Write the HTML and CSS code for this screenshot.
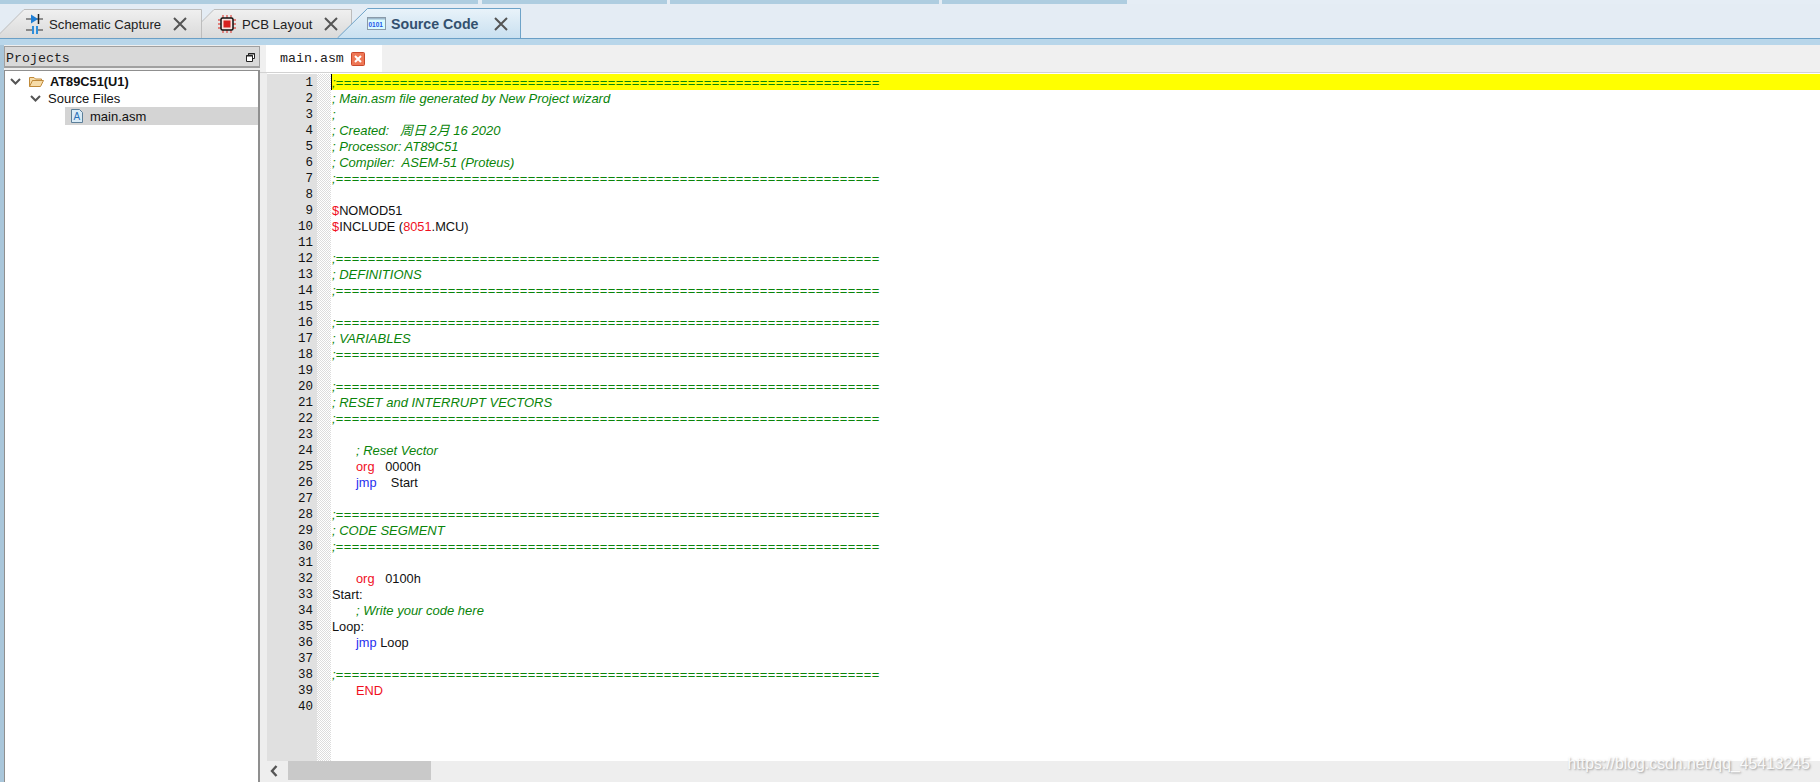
FILE: index.html
```html
<!DOCTYPE html>
<html lang="en">
<head>
<meta charset="utf-8">
<title>Source Code</title>
<link rel="stylesheet" href="styles.css">
</head>
<body>
<svg class="defs" width="0" height="0">
  <defs>
    <linearGradient id="tabGrey" x1="0" y1="0" x2="0" y2="1"><stop offset="0" stop-color="#f0f0f0"/><stop offset="1" stop-color="#dadada"/></linearGradient>
    <linearGradient id="tabBlue" x1="0" y1="0" x2="0" y2="1"><stop offset="0" stop-color="#e9f3fa"/><stop offset="1" stop-color="#c9e0f0"/></linearGradient>
  </defs>
</svg>
<div class="app">
  <div class="strip">
    <i class="seg s1"></i><i class="seg s2"></i><i class="seg s3"></i><i class="seg s4"></i>
  </div>
  <div class="tabbar">
    <div class="tab t1">
      <svg class="shape" width="207" height="29" viewBox="0 0 207 29"><path d="M0.5 29L29 0.5H206.5V29" fill="url(#tabGrey)" stroke="#bdbdbd"/></svg>
      <svg class="ico" width="17" height="22" viewBox="0 0 17 22"><path d="M0 6H17M0 17H7M10 17H17" stroke="#333" fill="none"/><path d="M5 1.500L12 6L5 10.500Z" fill="#1f7fd6"/><path d="M12.500 1V11" stroke="#222" stroke-width="1.500"/><path d="M6 13H8V21H6ZM10 13H12V21H10Z" fill="#2f8fdc"/></svg>
      <span class="label">Schematic Capture</span>
      <svg class="close" width="14" height="14" viewBox="0 0 14 14"><path d="M1 1L13 13M13 1L1 13" stroke="#555" stroke-width="2"/></svg>
    </div>
    <div class="tab t2">
      <svg class="shape" width="167" height="29" viewBox="0 0 167 29"><path d="M0.5 29L29 0.500H166.500V29" fill="url(#tabGrey)" stroke="#bdbdbd"/></svg>
      <svg class="ico" width="18" height="18" viewBox="0 0 18 18"><path d="M0 5H18M0 9H18M0 13H18M5 0V18M9 0V18M13 0V18" stroke="#e0605a" stroke-width="1.400"/><rect x="3" y="3" width="12" height="12" rx="1.500" fill="#f7e3e0" stroke="#111" stroke-width="1.500"/><rect x="5.500" y="5.500" width="7" height="7" fill="#d8201f"/></svg>
      <span class="label">PCB Layout</span>
      <svg class="close" width="14" height="14" viewBox="0 0 14 14"><path d="M1 1L13 13M13 1L1 13" stroke="#555" stroke-width="2"/></svg>
    </div>
    <div class="tab t3">
      <svg class="shape" width="184" height="31" viewBox="0 0 184 31"><path d="M0.5 30L30.500 0.500H183.500V30" fill="url(#tabBlue)" stroke="#6ea3c8"/></svg>
      <svg class="ico" width="19" height="13" viewBox="0 0 19 13"><rect x="0.500" y="0.500" width="18" height="12" fill="#d8fbff" stroke="#8a9aa8"/><rect x="1" y="1" width="17" height="1.500" fill="#9db8cc"/><text x="1.500" y="10" class="bits">0101</text></svg>
      <span class="label strong">Source Code</span>
      <svg class="close" width="14" height="14" viewBox="0 0 14 14"><path d="M1 1L13 13M13 1L1 13" stroke="#555" stroke-width="2"/></svg>
    </div>
  </div>
  <div class="band"></div>
  <div class="main">
    <aside class="side">
      <header class="side-head">
        <span class="mono">Projects</span>
        <svg width="9" height="9" viewBox="0 0 9 9"><path d="M2.500 2.500V0.500H8.500V5.500H6.500M0.500 2.500H6.500V8.500H0.500Z" fill="#fff" stroke="#222"/><path d="M0 3H7M2 1H9" stroke="#222"/></svg>
      </header>
      <div class="tree">
        <div class="row r1">
          <svg class="chev" width="11" height="7" viewBox="0 0 11 7"><path d="M1 1L5.500 5.500L10 1" fill="none" stroke="#555" stroke-width="2"/></svg>
          <svg class="folder" width="15" height="11" viewBox="0 0 15 11"><path d="M0.500 10.500V1.500H5L6.500 3H12.500V4.500H3.500L0.500 10.500ZM0.500 10.500H11.500L14.500 4.500H3.500" fill="#f7dca8" stroke="#c08a3a"/></svg>
          <b>AT89C51(U1)</b>
        </div>
        <div class="row r2">
          <svg class="chev" width="11" height="7" viewBox="0 0 11 7"><path d="M1 1L5.500 5.500L10 1" fill="none" stroke="#555" stroke-width="2"/></svg>
          <span>Source Files</span>
        </div>
        <div class="row r3">
          <svg class="file" width="12" height="14" viewBox="0 0 12 14"><path d="M0.500 0.500H8.500L11.500 3.500V13.500H0.500Z" fill="#d9ebf7" stroke="#5c7f99"/><text x="2.500" y="11" class="fileglyph">A</text></svg>
          <span>main.asm</span>
        </div>
      </div>
    </aside>
    <section class="editor">
      <div class="doc-tabs">
        <div class="doc-tab">
          <span class="mono">main.asm</span>
          <svg width="14" height="14" viewBox="0 0 14 14"><rect x="0.500" y="0.500" width="13" height="13" rx="1" fill="#ee7755" stroke="#c9482c"/><path d="M4 4L10 10M10 4L4 10" stroke="#fff" stroke-width="2"/></svg>
        </div>
      </div>
      <div class="code-area">
        <div class="gutter">
          <div>1</div><div>2</div><div>3</div><div>4</div><div>5</div><div>6</div><div>7</div><div>8</div><div>9</div><div>10</div>
          <div>11</div><div>12</div><div>13</div><div>14</div><div>15</div><div>16</div><div>17</div><div>18</div><div>19</div><div>20</div>
          <div>21</div><div>22</div><div>23</div><div>24</div><div>25</div><div>26</div><div>27</div><div>28</div><div>29</div><div>30</div>
          <div>31</div><div>32</div><div>33</div><div>34</div><div>35</div><div>36</div><div>37</div><div>38</div><div>39</div><div>40</div>
        </div>
        <div class="hatch"></div>
        <div class="code">
          <div class="ln current"><span class="c">;<span class="rule">====================================================================</span></span></div>
          <div class="ln"><span class="c">; Main.asm file generated by New Project wizard</span></div>
          <div class="ln"><span class="c">;</span></div>
          <div class="ln"><span class="c">; Created:   周日 2月 16 2020</span></div>
          <div class="ln"><span class="c">; Processor: AT89C51</span></div>
          <div class="ln"><span class="c">; Compiler:  ASEM-51 (Proteus)</span></div>
          <div class="ln"><span class="c">;<span class="rule">====================================================================</span></span></div>
          <div class="ln"></div>
          <div class="ln"><span class="r">$</span>NOMOD51</div>
          <div class="ln"><span class="r">$</span>INCLUDE (<span class="r">8051</span>.MCU)</div>
          <div class="ln"></div>
          <div class="ln"><span class="c">;<span class="rule">====================================================================</span></span></div>
          <div class="ln"><span class="c">; DEFINITIONS</span></div>
          <div class="ln"><span class="c">;<span class="rule">====================================================================</span></span></div>
          <div class="ln"></div>
          <div class="ln"><span class="c">;<span class="rule">====================================================================</span></span></div>
          <div class="ln"><span class="c">; VARIABLES</span></div>
          <div class="ln"><span class="c">;<span class="rule">====================================================================</span></span></div>
          <div class="ln"></div>
          <div class="ln"><span class="c">;<span class="rule">====================================================================</span></span></div>
          <div class="ln"><span class="c">; RESET and INTERRUPT VECTORS</span></div>
          <div class="ln"><span class="c">;<span class="rule">====================================================================</span></span></div>
          <div class="ln"></div>
          <div class="ln in"><span class="c">; Reset Vector</span></div>
          <div class="ln in"><span class="r">org</span>   0000h</div>
          <div class="ln in"><span class="b">jmp</span>    Start</div>
          <div class="ln"></div>
          <div class="ln"><span class="c">;<span class="rule">====================================================================</span></span></div>
          <div class="ln"><span class="c">; CODE SEGMENT</span></div>
          <div class="ln"><span class="c">;<span class="rule">====================================================================</span></span></div>
          <div class="ln"></div>
          <div class="ln in"><span class="r">org</span>   0100h</div>
          <div class="ln">Start:</div>
          <div class="ln in"><span class="c">; Write your code here</span></div>
          <div class="ln">Loop:</div>
          <div class="ln in"><span class="b">jmp</span> Loop</div>
          <div class="ln"></div>
          <div class="ln"><span class="c">;<span class="rule">====================================================================</span></span></div>
          <div class="ln in"><span class="r">END</span></div>
          <div class="ln"></div>
        </div>
      </div>
      <div class="hscroll">
        <div class="arrow"><svg width="8" height="12" viewBox="0 0 8 12"><path d="M6.500 1L2 6L6.500 11" fill="none" stroke="#555" stroke-width="2.400"/></svg></div>
        <div class="thumb"></div>
      </div>
    </section>
  </div>
  <div class="watermark">https://blog.csdn.net/qq_45413245</div>
</div>
</body>
</html>
```
FILE: styles.css
```css
* { box-sizing: border-box; }
html, body { margin: 0; height: 100%; overflow: hidden; background: #fff; }
body { font-family: "Liberation Sans", Arial, sans-serif; color: #111; }
.defs { position: absolute; }
.app { width: 1820px; height: 782px; display: flex; flex-direction: column; position: relative; overflow: hidden; }

.strip { height: 4px; display: flex; background: #e5edf5; flex: none; }
.seg { display: block; height: 4px; background: #aecde0; }
.s1 { width: 478px; margin-right: 4px; }
.s2 { width: 185px; margin-right: 3px; }
.s3 { width: 269px; margin-right: 3px; }
.s4 { width: 185px; }

.tabbar { height: 35px; flex: none; display: flex; align-items: flex-end; background: #e4ecf4; border-bottom: 1px solid #6a9fc6; }
.tab { position: relative; height: 29px; display: flex; align-items: center; flex: none; padding-top: 1px; }
.shape { position: absolute; left: 0; top: 0; }
.tab > .ico, .tab > .label, .tab > .close { position: relative; }
.t1 { width: 207px; margin-left: -5px; padding-left: 31px; z-index: 2; }
.t2 { width: 167px; margin-left: -17px; padding-left: 33px; z-index: 1; }
.t3 { width: 185px; height: 31px; margin-left: -15px; padding-left: 30px; padding-top: 0; z-index: 3; margin-bottom: -1px; }
.label { font-size: 13.200px; color: #222; white-space: nowrap; margin-left: 6px; }
.t3 .label { margin-left: 5px; }
.strong { font-weight: bold; color: #33506e; font-size: 14.200px; }
.close { margin-left: auto; }
.t1 .close { margin-right: 15px; }
.t2 .close { margin-right: 14px; }
.t3 .close { margin-right: 14px; }
.bits { font-family: "Liberation Sans", sans-serif; font-size: 6.500px; font-weight: bold; fill: #1f55e8; }

.band { height: 6px; flex: none; background: #b8d6ea; }

.main { flex: 1; min-height: 0; display: flex; background: #a9c6da; padding-left: 4px; }
.mono { font-family: "Liberation Mono", monospace; font-size: 13.300px; color: #222; }

.side { width: 256px; flex: none; background: #eee; display: flex; flex-direction: column; padding-top: 1px; }
.side-head { height: 22px; flex: none; background: #d9d9d9; border: 1px solid #a0a0a0; border-bottom-width: 2px; display: flex; align-items: center; justify-content: space-between; padding: 3px 4px 0 1px; }
.side-head svg { margin-top: -2px; }
.tree { flex: 1; background: #fff; margin-top: 2px; border: 1px solid #8f8f8f; border-width: 1px 2px 0 1px; padding-top: 2px; font-size: 13px; }
.row { height: 17px; display: flex; align-items: center; white-space: nowrap; }
.r1 { padding-left: 5px; }
.r1 b { margin-left: 6px; font-size: 12.800px; }
.r1 .folder { margin-left: 8px; }
.r2 { padding-left: 25px; }
.r2 span { margin-left: 7px; }
.r3 { margin-left: 60px; padding-left: 6px; height: 18px; background: #d4d4d4; }
.r3 span { margin-left: 7px; }
.fileglyph { font-family: "Liberation Sans", sans-serif; font-size: 10px; fill: #2a6fb8; }

.editor { flex: 1; min-width: 0; background: #fff; display: flex; flex-direction: column; }
.doc-tabs { height: 28px; flex: none; background: #f0f0f0; border-bottom: 1px solid #d2d2d2; padding-left: 6px; }
.doc-tab { width: 116px; height: 27px; background: #fff; display: flex; align-items: center; gap: 7px; padding-left: 14px; }
.code-area { flex: 1; min-height: 0; display: flex; background: #fff; padding-top: 1px; border-left: 7px solid #eee; }
.gutter { width: 50px; flex: none; background: #e0e0e0; font-family: "Liberation Mono", monospace; font-size: 12.500px; text-align: right; padding-right: 4px; color: #111; }
.gutter div { height: 16px; line-height: 18px; }
.hatch { width: 14px; flex: none; background: repeating-conic-gradient(#dcdcdc 0 25%, #fff 0 50%) 0 0 / 2px 2px; }
.code { flex: 1; min-width: 0; font-size: 12.800px; padding-left: 1px; }
.ln { height: 16px; line-height: 18px; white-space: pre; color: #111; }
.in { padding-left: 24px; }
.current { background: #ff0; box-shadow: inset 1px 0 0 #000; margin-left: -1px; padding-left: 1px; }
.c { color: #0a840a; font-size: 13px; font-style: italic; font-family: "Liberation Sans", "Noto Sans CJK SC", sans-serif; }
.rule { font-style: normal; letter-spacing: 0.410px; }
.r { color: #f0101e; }
.b { color: #1f2ff0; }

.hscroll { height: 21px; flex: none; background: #eee; display: flex; padding-bottom: 2px; }
.arrow { width: 28px; flex: none; display: flex; align-items: center; justify-content: center; }
.thumb { width: 143px; background: #c9c9c9; }

.watermark { position: absolute; right: 10px; bottom: 9px; font-size: 15.800px; line-height: 18px; color: rgba(255,255,255,.9); text-shadow: 1px 1px 2px rgba(90,90,90,.55); }
```
